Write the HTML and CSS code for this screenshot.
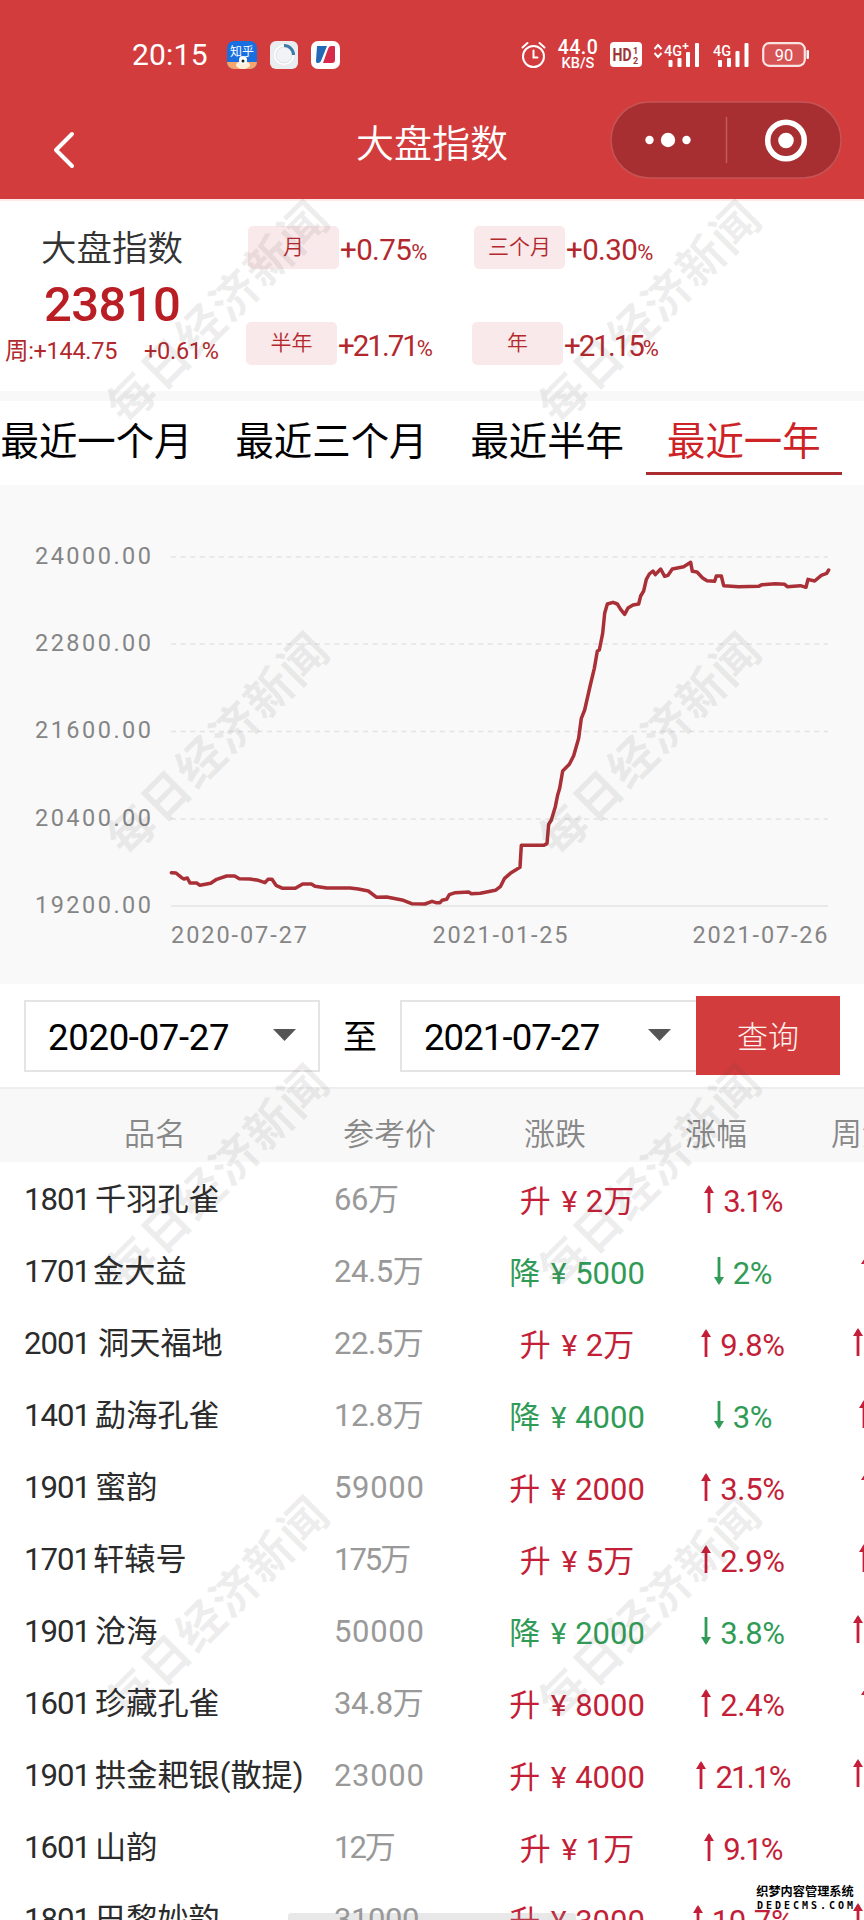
FILE: index.html
```html
<!DOCTYPE html>
<html lang="zh-CN">
<head>
<meta charset="utf-8">
<title>大盘指数</title>
<link rel="stylesheet" href="styles.css">
</head>
<body>
<div class="screen">
  <header class="top">
    <div class="status">
      <span class="clock">20:15</span>
      <svg class="app app-a" width="30" height="28" viewBox="0 0 30 28"><defs><clipPath id="r"><rect width="30" height="28" rx="7"/></clipPath></defs><g clip-path="url(#r)"><rect width="30" height="28" fill="#1a6fe0"/><rect y="21" width="30" height="7" fill="#f6a56c"/><ellipse cx="16" cy="24" rx="7" ry="4" fill="#fff0dc"/><circle cx="16" cy="19" r="4" fill="#fff"/><circle cx="16" cy="20" r="1.500" fill="#222"/></g><text x="3" y="15" font-size="12" fill="#fff">知乎</text></svg>
      <svg class="app app-b" width="28" height="28" viewBox="0 0 28 28"><rect width="28" height="28" rx="6" fill="#e9edf0"/><circle cx="14" cy="14" r="10" fill="#fff"/><circle cx="14" cy="14" r="8" fill="#f1f3f5" stroke="#dde2e6"/><path d="M14 4.500A9.500 9.500 0 0 1 23.500 14" fill="none" stroke="#3c7ba8" stroke-width="3"/></svg>
      <svg class="app app-c" width="29" height="28" viewBox="0 0 29 28"><rect width="29" height="28" rx="7" fill="#fff"/><path d="M6 5h10L10 20q-1 2-3 2H6q-1 0-1-2z" fill="#2468b8"/><path d="M23 5h-3q-2 0-3 3l-5 14h9q3 0 3-3V6q0-1-1-1z" fill="#d52a4a"/></svg>
      <svg class="alarm" width="25" height="28" viewBox="0 0 25 28" fill="none" stroke="#fff" stroke-width="2"><circle cx="12.500" cy="15.500" r="10.500"/><path d="M12.500 9.500v7h4M1.500 6.500l5-4.500M23.500 6.500l-5-4.500" stroke-linecap="round"/></svg>
      <span class="speed"><b>44.0</b><i>KB/S</i></span>
      <svg class="hd" width="32" height="25" viewBox="0 0 32 25"><rect width="32" height="25" rx="4" fill="#fff"/><g fill="#9e3536" font-weight="bold"><text x="2.500" y="19" font-size="18" textLength="19" lengthAdjust="spacingAndGlyphs">HD</text><text x="23" y="11.500" font-size="9">1</text><text x="23" y="22" font-size="9">2</text></g></svg>
      <svg class="sig1" width="46" height="26" viewBox="0 0 46 26"><path d="M0.500 7l3.500-4 3.500 4M0.500 11l3.500 4 3.500-4" fill="none" stroke="#fff" stroke-width="2"/><path d="M28.500 4h6M31.500 1v6" stroke="#fff" stroke-width="1.600"/><g fill="#fff"><text x="10" y="13.500" font-size="15.500" font-weight="500" textLength="18" lengthAdjust="spacingAndGlyphs">4G</text><rect x="14.500" y="18" width="4" height="7" rx="1"/><rect x="23.500" y="16" width="4" height="9" rx="1"/><rect x="32" y="10" width="4" height="15" rx="1"/><rect x="41" y="1" width="4" height="24" rx="1"/></g></svg>
      <svg class="sig2" width="36" height="26" viewBox="0 0 36 26"><g fill="#fff"><text x="0" y="13.500" font-size="15.500" font-weight="500" textLength="18" lengthAdjust="spacingAndGlyphs">4G</text><rect x="5" y="18" width="4" height="7" rx="1"/><rect x="14" y="16" width="4" height="9" rx="1"/><rect x="22.500" y="9" width="4" height="16" rx="1"/><rect x="31.500" y="1" width="4" height="24" rx="1"/></g></svg>
      <svg class="bat" width="48" height="26" viewBox="0 0 48 26"><rect x="1.200" y="1.200" width="41.600" height="22.600" rx="6" fill="#fff" fill-opacity=".12" stroke="#fff" stroke-opacity=".85" stroke-width="2.200"/><rect x="44.500" y="8" width="2.500" height="9" rx="1" fill="#fff"/><text x="22" y="18.500" font-size="16.500" text-anchor="middle" fill="#fff">90</text></svg>
    </div>
    <div class="nav">
      <svg class="back" width="24" height="38" viewBox="0 0 24 38"><path d="M20 3L4 19l16 16" fill="none" stroke="#fff" stroke-width="4" stroke-linecap="round" stroke-linejoin="round"/></svg>
      <h1>大盘指数</h1>
      <svg class="capsule" width="232" height="78" viewBox="0 0 232 78"><rect x="1" y="1" width="230" height="76" rx="38" fill="#a72f31" stroke="#c55455" stroke-width="1.500"/><path d="M116.500 16v46" stroke="#c25c5d" stroke-width="1.500"/><g fill="#fff"><circle cx="39.500" cy="39" r="4.200"/><circle cx="58" cy="39" r="7.200"/><circle cx="76.500" cy="39" r="4.200"/><circle cx="176" cy="39.500" r="7.800"/></g><circle cx="176" cy="39.500" r="18.300" fill="none" stroke="#fff" stroke-width="5.500"/></svg>
    </div>
  </header>

  <section class="summary">
    <div class="index">
      <div class="index-name">大盘指数</div>
      <div class="index-value">23810</div>
      <div class="index-week"><span>周:+144.75</span><span>+0.61%</span></div>
    </div>
    <div class="periods">
      <div class="period"><span class="pill">月</span><span class="rate">+0.75<small>%</small></span></div>
      <div class="period"><span class="pill">三个月</span><span class="rate">+0.30<small>%</small></span></div>
      <div class="period low"><span class="pill">半年</span><span class="rate tight">+21.71<small>%</small></span></div>
      <div class="period low"><span class="pill">年</span><span class="rate tight">+21.15<small>%</small></span></div>
    </div>
  </section>

  <nav class="tabs">
    <span class="tab">最近一个月</span><span class="tab">最近三个月</span><span class="tab">最近半年</span><span class="tab active">最近一年</span>
  </nav>

  <section class="chart">
    <svg width="864" height="499" viewBox="0 485 864 499">
      <g class="grid">
        <path d="M171 557H828M171 644H828M171 731.500H828M171 819H828" stroke-dasharray="5 4.600"/>
        <path d="M171 906H828"/>
      </g>
      <g class="axis">
        <text x="35" y="564" textLength="116">24000.00</text>
        <text x="35" y="651" textLength="116">22800.00</text>
        <text x="35" y="738" textLength="116">21600.00</text>
        <text x="35" y="826" textLength="116">20400.00</text>
        <text x="35" y="913" textLength="116">19200.00</text>
        <text x="171" y="943" textLength="136">2020-07-27</text>
        <text x="432.500" y="943" textLength="135">2021-01-25</text>
        <text x="692.500" y="943" textLength="135">2021-07-26</text>
      </g>
      <polyline class="line" transform="translate(0 490) scale(.33333)" points="514,1148 528,1149 545,1163 552,1167 562,1164 570,1179 590,1179 600,1186 632,1180 650,1168 680,1158 704,1158 718,1166 750,1167 775,1171 795,1178 804,1168 816,1168 828,1186 848,1195 886,1195 908,1182 934,1182 945,1189 980,1194 1050,1194 1075,1197 1105,1203 1130,1222 1160,1221 1210,1231 1235,1241 1275,1242 1296,1234 1308,1238 1320,1238 1326,1231 1340,1228 1348,1214 1366,1208 1406,1206 1414,1211 1441,1210 1486,1201 1501,1190 1513,1166 1531,1150 1560,1132 1564,1066 1631,1066 1641,1061 1646,1003 1654,990 1666,950 1673,915 1679,895 1688,843 1708,823 1721,797 1736,745 1744,685 1754,660 1771,585 1783,535 1792,483 1798,480 1808,430 1814,370 1822,342 1839,337 1852,342 1862,358 1874,373 1884,354 1899,345 1916,342 1922,318 1931,303 1939,268 1948,252 1959,243 1966,254 1982,237 1994,259 2004,256 2017,237 2051,230 2072,217 2077,244 2091,246 2108,264 2121,272 2144,274 2149,258 2164,258 2171,287 2216,290 2276,289 2286,284 2326,281 2354,283 2362,290 2401,287 2418,292 2424,268 2444,273 2464,256 2480,250 2486,240"/>
    </svg>
  </section>

  <section class="filter">
    <div class="select"><span>2020-07-27</span><svg width="23" height="12" viewBox="0 0 23 12"><path d="M0 0h23L11.500 12z" fill="#555"/></svg></div>
    <span class="to">至</span>
    <div class="select end"><span>2021-07-27</span><svg width="23" height="12" viewBox="0 0 23 12"><path d="M0 0h23L11.500 12z" fill="#555"/></svg></div>
    <div class="query">查询</div>
  </section>

  <svg width="0" height="0" class="defs"><symbol id="arrow" viewBox="0 0 10 28"><path d="M5 2v26" stroke="currentColor" stroke-width="2.800"/><path d="M5 0L10 8H0z" fill="currentColor"/></symbol></svg>
  <section class="table">
    <div class="thead"><span class="h-name">品名</span><span class="h-price">参考价</span><span class="h-change">涨跌</span><span class="h-pct">涨幅</span><span class="h-week">周涨</span></div>
    <div class="row up"><div class="name"><span>1801</span>千羽孔雀</div><div class="price">66万</div><div class="change">升<em>¥</em><b>2万</b></div><div class="pct ones"><svg><use href="#arrow"/></svg>3.1%</div><div class="week"></div></div>
    <div class="row down"><div class="name n17"><span>1701</span>金大益</div><div class="price">24.5万</div><div class="change">降<em>¥</em><b>5000</b></div><div class="pct"><svg><use href="#arrow"/></svg>2%</div><div class="week far"><svg><use href="#arrow"/></svg></div></div>
    <div class="row up"><div class="name n20"><span>2001</span>洞天福地</div><div class="price">22.5万</div><div class="change">升<em>¥</em><b>2万</b></div><div class="pct"><svg><use href="#arrow"/></svg>9.8%</div><div class="week near"><svg><use href="#arrow"/></svg></div></div>
    <div class="row down"><div class="name"><span>1401</span>勐海孔雀</div><div class="price">12.8万</div><div class="change">降<em>¥</em><b>4000</b></div><div class="pct"><svg><use href="#arrow"/></svg>3%</div><div class="week mid"><svg><use href="#arrow"/></svg></div></div>
    <div class="row up"><div class="name"><span>1901</span>蜜韵</div><div class="price wide">59000</div><div class="change">升<em>¥</em><b>2000</b></div><div class="pct"><svg><use href="#arrow"/></svg>3.5%</div><div class="week far"><svg><use href="#arrow"/></svg></div></div>
    <div class="row up"><div class="name n17"><span>1701</span>轩辕号</div><div class="price tight">175万</div><div class="change">升<em>¥</em><b>5万</b></div><div class="pct"><svg><use href="#arrow"/></svg>2.9%</div><div class="week mid"><svg><use href="#arrow"/></svg></div></div>
    <div class="row down"><div class="name"><span>1901</span>沧海</div><div class="price wide">50000</div><div class="change">降<em>¥</em><b>2000</b></div><div class="pct"><svg><use href="#arrow"/></svg>3.8%</div><div class="week near"><svg><use href="#arrow"/></svg></div></div>
    <div class="row up"><div class="name"><span>1601</span>珍藏孔雀</div><div class="price">34.8万</div><div class="change">升<em>¥</em><b>8000</b></div><div class="pct"><svg><use href="#arrow"/></svg>2.4%</div><div class="week far"><svg><use href="#arrow"/></svg></div></div>
    <div class="row up"><div class="name"><span>1901</span>拱金耙银(散提)</div><div class="price wide">23000</div><div class="change">升<em>¥</em><b>4000</b></div><div class="pct ones"><svg><use href="#arrow"/></svg>21.1%</div><div class="week near"><svg><use href="#arrow"/></svg></div></div>
    <div class="row up"><div class="name"><span>1601</span>山韵</div><div class="price tight">12万</div><div class="change">升<em>¥</em><b>1万</b></div><div class="pct ones"><svg><use href="#arrow"/></svg>9.1%</div><div class="week"></div></div>
    <div class="row up"><div class="name"><span>1801</span>巴黎妙韵</div><div class="price">31000</div><div class="change">升<em>¥</em><b>3000</b></div><div class="pct"><svg><use href="#arrow"/></svg>10.7%</div><div class="week near"><svg><use href="#arrow"/></svg></div></div>
  </section>

  <div class="marks">
    <span>每日经济新闻</span><span>每日经济新闻</span><span>每日经济新闻</span><span>每日经济新闻</span>
    <span>每日经济新闻</span><span>每日经济新闻</span><span>每日经济新闻</span><span>每日经济新闻</span>
  </div>
  <div class="home-bar"></div>
  <div class="credit"><span>织梦内容管理系统</span><b>DEDECMS.COM</b></div>
</div>
</body>
</html>
```
FILE: styles.css
```css
* { box-sizing: border-box; }
body { margin: 0; background: #fff; font-family: Roboto, "Noto Sans CJK SC", sans-serif; color: #000; }
svg { display: block; flex: none; }
.screen { position: relative; width: 864px; height: 1920px; overflow: hidden; white-space: nowrap; }
.defs { position: absolute; }

.top { height: 199px; background: #d33c3d; color: #fff; }
.status { display: flex; align-items: center; height: 82px; padding: 27px 0 0 132px; }
.clock { width: 95px; font-size: 30px; letter-spacing: .2px; line-height: 34px; }
.app-b { margin-left: 13px; }
.app-c { margin-left: 13px; }
.alarm { margin-left: 181px; }
.speed { width: 42px; margin-left: 11px; display: flex; flex-direction: column; align-items: center; }
.speed b { font-size: 19.5px; line-height: 17px; font-weight: 500; letter-spacing: .5px; }
.speed i { font-size: 14.5px; line-height: 15px; font-style: normal; font-weight: 500; }
.hd { margin-left: 11px; }
.sig1 { margin-left: 12px; }
.sig2 { margin-left: 13px; }
.bat { margin-left: 13px; }
.nav { display: grid; grid-template-columns: 253px 1fr 253px; align-items: center; height: 117px; }
.back { margin: 19px 0 0 52px; }
.nav h1 { margin: 6px 0 0; font-size: 38px; line-height: 50px; font-weight: 350; text-align: center; }
.capsule { margin: -2px 0 0 -1px; }

.summary { display: flex; height: 192px; border-top: 2px solid #fdeae6; color: #b3282d; }
.index { width: 246px; padding: 20px 0 0 5px; }
.index-name { padding-left: 36px; font-size: 35.500px; line-height: 56px; font-weight: 350; color: #333; }
.index-value { padding-left: 39px; font-size: 49px; line-height: 56px; font-weight: 500; letter-spacing: -.6px; color: #b81e23; }
.index-week { display: flex; gap: 27px; font-size: 23.500px; line-height: 36px; letter-spacing: -.3px; }
.periods { display: grid; grid-template-columns: 226px 226px; grid-template-rows: 96px 44px; padding: 25px 0 0 2px; }
.period { display: flex; align-items: flex-start; }
.period.low { margin-left: -2px; }
.pill { width: 91px; height: 43px; border-radius: 5px; background: #fae9ea; font-size: 21px; line-height: 43px; font-weight: 350; text-align: center; }
.rate { margin-left: 1px; font-size: 29.500px; line-height: 48px; letter-spacing: -.6px; }
.rate small { font-size: 22px; }
.rate.tight { letter-spacing: -2px; }

.tabs { display: flex; height: 94px; padding-left: 1px; margin-left: -22px; border-top: 10px solid #f8f8f8; width: 886px; }
.tab { height: 74px; padding: 11px 21.500px 0; font-size: 38.400px; line-height: 60px; }
.tab.active { color: #ce2326; border-bottom: 3px solid #a92c30; }

.chart { height: 499px; background: #f9f9f9; }
.grid path { fill: none; stroke: #e3e3e3; stroke-width: 1.500; }
.axis { font-size: 23.500px; fill: #858585; }
.line { fill: none; stroke: #a93037; stroke-width: 10.500; stroke-linejoin: round; stroke-linecap: round; }

.filter { display: flex; height: 103px; padding: 12px 0 0 24px; }
.select { display: flex; justify-content: space-between; align-items: center; width: 296px; height: 72px; margin-top: 4px; padding: 2px 22px 0 22px; border: 2px solid #e4e4e4; font-size: 36.500px; letter-spacing: -.3px; }
.select.end { border-right: 0; padding-right: 25px; letter-spacing: -.9px; }
.select svg { margin-top: -4px; }
.to { width: 80px; text-align: center; font-size: 34px; line-height: 82px; }
.query { width: 144px; height: 79px; background: #d33c3d; color: #fff2ee; font-size: 31px; line-height: 83px; font-weight: 300; text-align: center; }

.thead { display: grid; grid-template-columns: 343px 181px 161px 146px 100px; height: 75px; padding-top: 17px; border-top: 2px solid #eee; background: #f8f8f8; color: #888; font-size: 31px; line-height: 58px; font-weight: 350; }
.h-name { padding-left: 124px; }
.row { display: grid; grid-template-columns: 310px 153px 180px 152px 60px; align-items: center; height: 71.930px; padding-left: 24px; font-size: 31px; line-height: 46px; }
.name, .price { padding-top: 5px; }
.name { display: flex; color: #2b2b2b; font-size: 31.200px; }
.name span { width: 71px; letter-spacing: -1px; }
.name.n17 span { width: 69px; }
.name.n20 span { width: 74px; }
.price { color: #999; letter-spacing: -.4px; }
.price.wide { letter-spacing: .7px; }
.price.tight { letter-spacing: -2px; }
.change, .pct { display: flex; justify-content: center; padding-top: 9px; }
.change em { width: 17px; margin: 0 8px 0 10px; font-size: 30px; font-style: normal; display: flex; justify-content: center; }
.change b { font-weight: 400; }
.pct { letter-spacing: -.3px; }
.pct.ones { letter-spacing: -1.800px; }
.row svg { width: 10px; height: 28px; }
.pct svg { margin: 6px 9px 0 0; }
.down .pct svg { transform: rotate(180deg); }
.up { color: #c41f38; }
.down { color: #2f9b56; }
.week { color: #c41f38; }
.week.far { padding-left: 42px; }
.week.mid { padding-left: 40px; }
.week.near { padding-left: 34px; }

.marks { position: absolute; left: -1px; top: 93px; display: grid; grid-template-columns: 432px 432px; grid-auto-rows: 432px; place-items: center; pointer-events: none; }
.marks span { transform: rotate(-45deg); font-size: 47px; letter-spacing: 1.500px; font-weight: 700; color: rgba(70, 70, 70, .09); }
.home-bar { position: absolute; left: 288px; bottom: 0; width: 288px; height: 7px; border-radius: 3px 3px 0 0; background: rgba(150, 150, 150, .22); }
.credit { position: absolute; left: 755px; top: 1885px; width: 100px; display: flex; flex-direction: column; align-items: center; color: #000; text-shadow: 1px 0 #fff, -1px 0 #fff, 0 1px #fff, 0 -1px #fff; }
.credit span { font-size: 12.200px; line-height: 15px; font-weight: 600; }
.credit b { font-family: "DejaVu Sans Mono", monospace; font-size: 10px; line-height: 12px; letter-spacing: 3px; margin-right: -3px; }
```
